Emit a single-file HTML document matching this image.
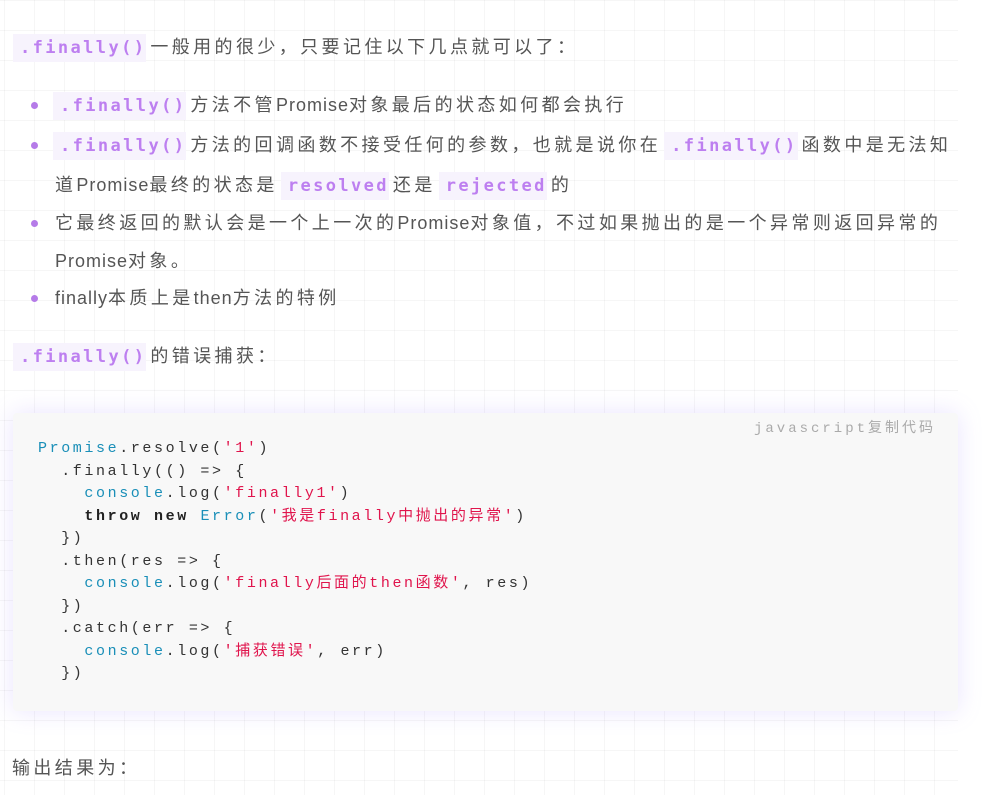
<!DOCTYPE html>
<html><head><meta charset="utf-8"><style>
html,body{margin:0;padding:0;}
body{width:988px;height:795px;overflow:hidden;position:relative;background:#fff;
font-family:"Liberation Sans","Noto Sans CJK SC",sans-serif;color:#555;font-size:18px;}
.grid{position:absolute;left:0;top:0;width:958px;height:795px;
background-image:linear-gradient(to right,rgba(0,0,0,0.035) 1px,transparent 1px),linear-gradient(to bottom,rgba(0,0,0,0.035) 1px,transparent 1px);
background-size:30px 30px;background-position:4px 0px;}
.l{position:absolute;white-space:nowrap;line-height:24px;letter-spacing:3.4px;}
.l span.e{letter-spacing:1px;}
code.i{font-family:"DejaVu Sans Mono","Liberation Mono",monospace;font-weight:bold;color:#bd7ff0;background:#f7f3fd;font-size:17px;letter-spacing:2.4px;padding:4px 0px 4px 7px;margin:0 4px 0 3px;}
.dot{position:absolute;width:7px;height:7px;border-radius:50%;background:#b57be8;}
.code{position:absolute;left:13px;top:413px;width:945px;height:298px;background:#f8f8f8;border-radius:4px;
box-shadow:0 0 24px rgba(160,130,255,0.22);}
.c{position:absolute;font-family:"Liberation Mono","Noto Sans CJK SC",monospace;font-size:15px;letter-spacing:2.6px;white-space:pre;color:#333;line-height:22.5px;}
.b{color:#1a8fb8}.s{color:#e0144c}.k{font-weight:bold;color:#222}
.lang{position:absolute;right:22px;top:4px;font-family:"Liberation Mono","Noto Sans CJK SC",monospace;font-size:14px;letter-spacing:3px;color:#aaa;}
</style></head><body>
<div class="grid"></div>
<div class="l" style="left:10px;top:35px"><code class="i">.finally()</code>一般用的很少，只要记住以下几点就可以了：</div>

<div class="dot" style="left:31px;top:102px"></div>
<div class="l" style="left:50px;top:93px"><code class="i">.finally()</code>方法不管<span class="e">Promise</span>对象最后的状态如何都会执行</div>
<div class="dot" style="left:31px;top:142px"></div>
<div class="l" style="left:50px;top:133px"><code class="i">.finally()</code>方法的回调函数不接受任何的参数，也就是说你在<code class="i">.finally()</code>函数中是无法知</div>
<div class="l" style="left:55px;top:173px">道<span class="e">Promise</span>最终的状态是<code class="i">resolved</code>还是<code class="i">rejected</code>的</div>
<div class="dot" style="left:31px;top:220px"></div>
<div class="l" style="left:55px;top:211px">它最终返回的默认会是一个上一次的<span class="e">Promise</span>对象值，不过如果抛出的是一个异常则返回异常的</div>
<div class="l" style="left:55px;top:249px"><span class="e">Promise</span>对象。</div>
<div class="dot" style="left:31px;top:295px"></div>
<div class="l" style="left:55px;top:286px"><span class="e">finally</span>本质上是<span class="e">then</span>方法的特例</div>

<div class="l" style="left:10px;top:344px"><code class="i">.finally()</code>的错误捕获：</div>

<div class="code">
<div class="lang">javascript复制代码</div>
<div class="c" style="left:25px;top:25px"><span class="b">Promise</span>.resolve(<span class="s">'1'</span>)
  .finally(() =&gt; {
    <span class="b">console</span>.log(<span class="s">'finally1'</span>)
    <span class="k">throw</span> <span class="k">new</span> <span class="b">Error</span>(<span class="s">'我是finally中抛出的异常'</span>)
  })
  .then(res =&gt; {
    <span class="b">console</span>.log(<span class="s">'finally后面的then函数'</span>, res)
  })
  .catch(err =&gt; {
    <span class="b">console</span>.log(<span class="s">'捕获错误'</span>, err)
  })</div>
</div>

<div class="l" style="left:12px;top:756px">输出结果为：</div>
</body></html>
